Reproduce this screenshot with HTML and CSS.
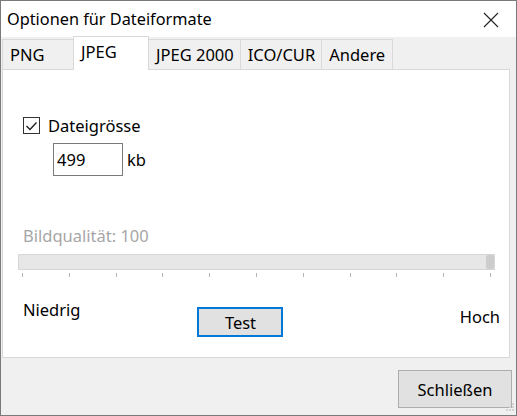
FILE: index.html
```html
<!DOCTYPE html>
<html lang="de">
<head>
    <meta charset="UTF-8">
    <title>Optionen für Dateiformate</title>
    <link rel="stylesheet" href="styles.css">
</head>
<body>
    <div class="fenster">
        <div class="titelleiste">
            <span class="titel">Optionen für Dateiformate</span>
            <svg class="schliessen-x" width="16" height="16" viewBox="0 0 16 16">
                <path d="M1 1 L15 15 M15 1 L1 15" stroke="#222" stroke-width="1.1" fill="none"/>
            </svg>
        </div>

        <div class="inhalt">
            <div class="reiter">
                <div class="tab">PNG</div>
                <div class="tab aktiv">JPEG</div>
                <div class="tab">JPEG 2000</div>
                <div class="tab">ICO/CUR</div>
                <div class="tab">Andere</div>
            </div>

            <div class="panel">
                <label class="check-zeile">
                    <span class="checkbox">
                        <svg width="17" height="17" viewBox="0 0 17 17">
                            <path d="M3.5 9 L7 12.5 L13.5 5.5" stroke="#222" stroke-width="1.4" fill="none"/>
                        </svg>
                    </span>
                    Dateigrösse
                </label>

                <div class="groesse-zeile">
                    <input type="text" class="eingabe" value="499">
                    <span>kb</span>
                </div>

                <div class="qualitaet">Bildqualität: 100</div>
                <div class="schiene">
                    <div class="griff"></div>
                </div>
                <div class="ticks">
                    <span></span><span></span><span></span><span></span><span></span><span></span>
                    <span></span><span></span><span></span><span></span><span></span>
                </div>

                <div class="unten-zeile">
                    <span class="niedrig">Niedrig</span>
                    <button class="test-knopf">Test</button>
                    <span class="hoch">Hoch</span>
                </div>
            </div>

            <div class="fuss">
                <button class="knopf">Schließen</button>
            </div>
        </div>

        <svg class="griffecke" width="12" height="12" viewBox="0 0 12 12">
            <g fill="#d2d2d2">
                <rect x="9" y="1" width="2" height="2"/>
                <rect x="6" y="4" width="2" height="2"/>
                <rect x="9" y="4" width="2" height="2"/>
                <rect x="3" y="7" width="2" height="2"/>
                <rect x="6" y="7" width="2" height="2"/>
                <rect x="9" y="7" width="2" height="2"/>
            </g>
        </svg>
    </div>
</body>
</html>
```

FILE: styles.css
```css
body {
    margin: 0;
    font-family: "Noto Sans", "Open Sans", sans-serif;
    font-size: 16.5px;
    color: #000;
    background-color: #fff;
}

.fenster {
    position: relative;
    width: 517px;
    height: 416px;
    box-sizing: border-box;
    border: 1px solid #7a7a7a;
    background-color: #f0f0f0;
    display: flex;
    flex-direction: column;
}

.titelleiste {
    height: 36px;
    background-color: #fff;
    display: flex;
    align-items: center;
    justify-content: space-between;
    padding: 0 17px 0 6px;
}

.titel {
    font-size: 16.3px;
    margin-top: -1px;
}

.schliessen-x {
    margin-top: 2px;
}

.inhalt {
    flex: 1;
    display: flex;
    flex-direction: column;
    padding-left: 1px;
}

/* Reiter */
.reiter {
    display: flex;
    align-items: flex-end;
    height: 32px;
    position: relative;
    z-index: 1;
}

.tab {
    min-width: 72px;
    height: 30px;
    box-sizing: border-box;
    padding: 0 6px 0 7px;
    border: 1px solid #d9d9d9;
    border-bottom: none;
    margin-right: -1px;
    display: flex;
    align-items: center;
    background-color: #f0f0f0;
}

.tab.aktiv {
    min-width: 76px;
    height: 34px;
    background-color: #fff;
    margin-bottom: -1px;
    padding-bottom: 4px;
}

.panel {
    width: 508px;
    height: 289px;
    box-sizing: border-box;
    border: 1px solid #d9d9d9;
    background-color: #fff;
    padding: 44px 0 0 20px;
}

.check-zeile {
    display: flex;
    align-items: center;
    gap: 8px;
    height: 22px;
}

.checkbox {
    width: 17px;
    height: 17px;
    box-sizing: border-box;
    border: 1px solid #333;
    display: flex;
}

.checkbox svg {
    margin: -1px;
}

.groesse-zeile {
    display: flex;
    align-items: center;
    gap: 4px;
    margin: 7px 0 0 30px;
}

.eingabe {
    width: 70px;
    height: 33px;
    box-sizing: border-box;
    border: 1px solid #7a7a7a;
    font-family: inherit;
    font-size: 16.5px;
    padding: 0 3px;
    margin: 0;
}

.qualitaet {
    color: #a6a6a6;
    margin-top: 50px;
    line-height: 20px;
}

.schiene {
    margin: 8px 0 0 -5px;
    width: 477px;
    height: 16px;
    box-sizing: border-box;
    background-color: #e7e7e7;
    border: 1px solid #d6d6d6;
    display: flex;
    justify-content: flex-end;
}

.griff {
    width: 8px;
    background-color: #cdcdcd;
    border-radius: 2px;
}

.ticks {
    display: flex;
    justify-content: space-between;
    width: 469px;
    margin: 3px 0 0 -1px;
    height: 4px;
}

.ticks span {
    width: 1px;
    height: 4px;
    background-color: #b5b5b5;
}

.unten-zeile {
    display: flex;
    align-items: flex-start;
    margin-top: 22px;
}

.niedrig {
    line-height: 22px;
}

.test-knopf {
    margin: 8px 0 0 117px;
    width: 86px;
    height: 30px;
    border: 2px solid #0078d7;
    background-color: #e1e1e1;
    font-family: inherit;
    font-size: 16.5px;
    padding: 0;
}

.hoch {
    margin: 7px 9px 0 auto;
    line-height: 22px;
}

/* Fuss */
.fuss {
    flex: 1;
    display: flex;
    justify-content: flex-end;
    align-items: flex-start;
    padding: 12px 4px 0 0;
}

.knopf {
    width: 114px;
    height: 38px;
    border: 1px solid #adadad;
    background-color: #e1e1e1;
    font-family: inherit;
    font-size: 16.5px;
    padding: 0;
}

.griffecke {
    position: absolute;
    right: 1px;
    bottom: 1px;
}
```
